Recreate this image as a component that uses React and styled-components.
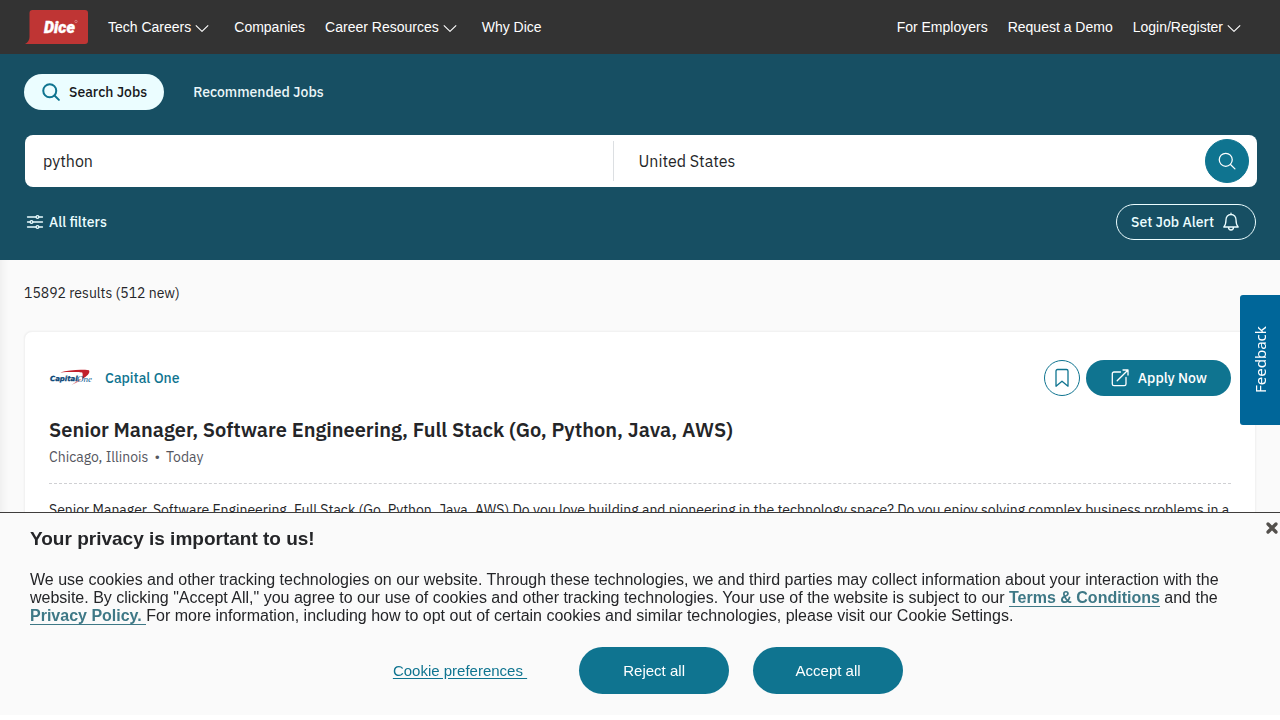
import React from "react";
import styled, { createGlobalStyle } from "styled-components";

const sans = '"Liberation Sans", Arial, sans-serif';
const plex = '"IBM Plex Sans", Roboto, sans-serif';

const GlobalStyle = createGlobalStyle`
  *, *::before, *::after { box-sizing: border-box; }
  body { margin: 0; background: #fafafa; color: #242528; font-family: ${plex}; font-size: 14px; overflow: hidden; }
  h1, h2, p { margin: 0; }
  button, input { font: inherit; }
  button { cursor: pointer; }
  svg { display: block; flex: none; }
`;

const Header = styled.header`
  display: flex;
  align-items: center;
  justify-content: space-between;
  height: 54px;
  padding: 0 34px 0 24px;
  background: #333;
  font-family: ${sans};
`;

const Nav = styled.nav`
  display: flex;
  align-items: center;
  gap: 20px;
`;

const LogoLink = styled.a`
  display: block;
`;

const NavLink = styled.a`
  color: #fff;
  line-height: 20px;
  text-decoration: none;
`;

const MenuButton = styled.button`
  display: flex;
  align-items: center;
  gap: 3px;
  padding: 0 4px 0 0;
  border: 0;
  background: none;
  color: #fff;
  line-height: 20px;
`;

const Hero = styled.section`
  display: flex;
  flex-direction: column;
  padding: 20px 24px;
  background: #174f63;
`;

const Tabs = styled.div`
  display: flex;
  gap: 12px;
`;

const Tab = styled.button`
  display: flex;
  align-items: center;
  gap: 8px;
  height: 36px;
  padding: 0 17px;
  border: 0;
  border-radius: 18px;
  background: ${(p) => (p.$active ? "#ebfdff" : "transparent")};
  color: ${(p) => (p.$active ? "#17181a" : "#ebf6f8")};
  font-weight: 500;

  svg { color: #0f7490; }
`;

const SearchBar = styled.form`
  display: flex;
  align-items: center;
  height: 52px;
  margin: 25px -1px 17px 1px;
  padding: 0 8px 0 0;
  border-radius: 8px;
  background: #fff;
`;

const Field = styled.input`
  flex: 1 1 ${(p) => p.$basis};
  min-width: 0;
  height: 40px;
  padding: 0 ${(p) => p.$pad};
  border: 0;
  border-left: 1px solid ${(p) => (p.$divided ? "#dcdfe2" : "transparent")};
  outline: 0;
  background: none;
  color: #242528;
  font-size: 16px;
`;

const RoundButton = styled.button`
  display: grid;
  place-items: center;
  flex: none;
  width: ${(p) => p.$size};
  height: ${(p) => p.$size};
  padding: 0;
  border: 1px solid #0f7490;
  border-radius: 50%;
  background: ${(p) => (p.$filled ? "#0f7490" : "#fff")};
  color: ${(p) => (p.$filled ? "#fff" : "#0f7490")};
`;

const FilterRow = styled.div`
  display: flex;
  align-items: center;
  justify-content: space-between;
`;

const FilterButton = styled.button`
  display: flex;
  align-items: center;
  gap: 5px;
  padding: 0 2px;
  border: 0;
  background: none;
  color: #ebfdff;
  font-weight: 500;
`;

const AlertButton = styled.button`
  display: flex;
  align-items: center;
  gap: 7px;
  height: 36px;
  padding: 0 14px;
  border: 1px solid #ebfdff;
  border-radius: 18px;
  background: none;
  color: #ebfdff;
  font-weight: 500;
`;

const Results = styled.main`
  padding: 23px 24px;
  box-shadow: inset 10px 0 8px -8px rgba(0, 0, 0, 0.06);
`;

const ResultCount = styled.p`
  line-height: 20px;
`;

const Card = styled.article`
  margin-top: 28px;
  padding: 28px 24px;
  border: 1px solid #f2f2f2;
  border-radius: 8px;
  background: #fff;
  box-shadow: 0 0 2px rgba(0, 0, 0, 0.06);
`;

const CardTop = styled.div`
  display: flex;
  align-items: center;
  justify-content: space-between;
`;

const Company = styled.a`
  display: flex;
  align-items: center;
  gap: 12px;
  color: #0f7490;
  font-weight: 500;
  text-decoration: none;
`;

const Actions = styled.div`
  display: flex;
  gap: 6px;
`;

const ApplyButton = styled.button`
  display: flex;
  align-items: center;
  justify-content: center;
  gap: 8px;
  min-width: 145px;
  height: 36px;
  padding: 0 24px;
  border: 0;
  border-radius: 18px;
  background: #0f7490;
  color: #fff;
  font-weight: 500;
`;

const JobTitle = styled.h2`
  margin-top: 20px;
  color: #242528;
  font-size: 20px;
  font-weight: 600;
  line-height: 28px;
`;

const JobMeta = styled.p`
  display: flex;
  gap: 6px;
  margin-top: 3px;
  color: #55565e;
  line-height: 20px;
`;

const Summary = styled.p`
  margin-top: 16px;
  padding-top: 16px;
  border-top: 1px dashed #cfd0d3;
  line-height: 20px;
`;

const FeedbackTab = styled.button`
  position: fixed;
  top: 295px;
  right: 0;
  width: 40px;
  height: 130px;
  padding: 0;
  border: 0;
  border-radius: 0 3px 3px 0;
  background: #006699;
  color: #fff;
  font-family: "Noto Sans", sans-serif;
  font-size: 15px;
  writing-mode: vertical-rl;
  transform: rotate(180deg);
`;

const Banner = styled.section`
  position: fixed;
  right: 0;
  bottom: 5px;
  left: 0;
  padding: 14px 30px 21px;
  border-top: 1px solid #3f3d3c;
  background: #fafafa;
  box-shadow: 0 5px 0 #fff;
  font-family: ${sans};
`;

const BannerTitle = styled.h2`
  color: #242528;
  font-size: 19px;
  line-height: 24px;
`;

const BannerText = styled.p`
  margin-top: 20px;
  font-size: 16px;
  line-height: 18px;
`;

const PolicyLink = styled.a`
  border-bottom: 1px solid #3e7886;
  color: #3e7886;
  font-weight: 700;
  text-decoration: none;
  white-space: pre-wrap;
`;

const BannerActions = styled.div`
  display: flex;
  align-items: center;
  justify-content: center;
  gap: 24px;
  margin-top: 22px;
  padding-left: 16px;
  font-size: 15px;
`;

const PreferencesButton = styled.button`
  margin-right: 28px;
  padding: 0;
  border: 0;
  background: none;
  color: #0f7490;
  text-decoration: underline;
  text-underline-offset: 2px;
  white-space: pre;
`;

const ConsentButton = styled.button`
  width: 150px;
  height: 47px;
  border: 0;
  border-radius: 24px;
  background: #0f7490;
  color: #fff;
`;

const CloseButton = styled.button`
  position: absolute;
  top: 8px;
  right: 1px;
  padding: 0;
  border: 0;
  background: none;
  color: #53504c;
`;

const Svg = ({ w = 24, h = w, box = "0 0 24 24", sw = 1.5, cap = "round", children }) => (
  <svg width={w} height={h} viewBox={box} fill="none" stroke="currentColor" strokeWidth={sw} strokeLinecap={cap} strokeLinejoin="round" aria-hidden="true">
    {children}
  </svg>
);

const Chevron = () => (
  <Svg w={16} box="0 0 16 16" sw={1.1} cap="butt">
    <path d="M1.800 6.300L8 12.300l6.200-6" />
  </Svg>
);

const SearchIcon = ({ size, sw }) => (
  <Svg w={size} sw={sw}>
    <circle cx="10.5" cy="10.5" r="7.800" />
    <path d="M16.200 16.200l5.300 5.300" />
  </Svg>
);

const FiltersIcon = () => (
  <Svg w={18} box="0 0 18 18" sw={1.3}>
    <path d="M1.500 4H10M13 4h3.500M1.500 9H4M7 9h9.500M1.500 14H10M13 14h3.500" />
    <circle cx="11.500" cy="4" r="1.400" />
    <circle cx="5.500" cy="9" r="1.400" />
    <circle cx="11.500" cy="14" r="1.400" />
  </Svg>
);

const BellIcon = () => (
  <Svg w={20} box="0 0 20 20" sw={1.3}>
    <path d="M10 1.200v1.300M10 2.500c-3.100 0-5 2.300-5 5.300 0 4-1 6-2.200 7.200h14.400C16 13.800 15 11.800 15 7.800c0-3-1.900-5.300-5-5.300zM7.500 15.200c0 1.600 1 2.800 2.500 2.800s2.500-1.200 2.500-2.800" />
  </Svg>
);

const BookmarkIcon = () => (
  <Svg w={20} box="0 0 20 20" sw={1.3}>
    <path d="M4 3c0-.9.600-1.500 1.500-1.500h9c.9 0 1.500.6 1.500 1.500v15.200L10 13.200l-6 5z" />
  </Svg>
);

const ExternalIcon = () => (
  <Svg w={20} box="0 0 20 20" sw={1.3}>
    <path d="M10.500 4H4c-1 0-1.700.7-1.700 1.700V16c0 1 .7 1.700 1.700 1.700h10.300c1 0 1.700-.7 1.700-1.700V9.500M7.200 12.800L18 2M13 2h5v5" />
  </Svg>
);

const CloseIcon = () => (
  <Svg w={14} box="0 0 14 14" sw={3.4}>
    <path d="M3 3l8 8M11 3l-8 8" />
  </Svg>
);

const DiceLogo = () => (
  <svg width="64" height="34" viewBox="0 0 64 34" role="img" aria-label="Dice">
    <path d="M5.500 3q0-3 3-3H61q3 0 3 3v28q0 3-3 3H1Q5.500 31.500 5.500 27z" fill="#bf3534" />
    <text x="20" y="23" fill="#fff" stroke="#fff" strokeWidth=".4" fontFamily="Roboto, sans-serif" fontSize="16" fontWeight="900" fontStyle="italic">Dice</text>
    <circle cx="52" cy="11.500" r="1.200" fill="none" stroke="#e8b4b4" strokeWidth=".5" />
  </svg>
);

const CapitalOneLogo = () => (
  <svg width="44" height="18" viewBox="0 0 44 18" role="img" aria-label="Capital One">
    <path d="M11 3.400C20 .8 32 .2 40 1.200c1.500 2.900-2 6-7 8.800.5-2 1-4 .4-6.300C32 2.900 21 2.600 11 3.400z" fill="#c2202c" />
    <path d="M32.500 10.500C29 13 26 14.500 22.500 16c3-2.200 5-3.800 7.500-6z" fill="#dd8c92" />
    <text x="1" y="12" fill="#0b4778" stroke="#0b4778" strokeWidth=".3" fontFamily="DejaVu Sans, sans-serif" fontSize="7" fontWeight="700" fontStyle="italic">Capital</text>
    <text x="28" y="12.500" fill="#0b5b94" fontFamily="Liberation Serif, serif" fontSize="9" fontStyle="italic">One</text>
  </svg>
);

export default function App() {
  return (
    <>
      <GlobalStyle />
      <Header>
        <Nav aria-label="Main">
          <LogoLink href="#"><DiceLogo /></LogoLink>
          <MenuButton>Tech Careers <Chevron /></MenuButton>
          <NavLink href="#">Companies</NavLink>
          <MenuButton>Career Resources <Chevron /></MenuButton>
          <NavLink href="#">Why Dice</NavLink>
        </Nav>
        <Nav aria-label="Account">
          <NavLink href="#">For Employers</NavLink>
          <NavLink href="#">Request a Demo</NavLink>
          <MenuButton>Login/Register <Chevron /></MenuButton>
        </Nav>
      </Header>
      <Hero>
        <Tabs>
          <Tab $active><SearchIcon size={20} sw={2.4} />Search Jobs</Tab>
          <Tab>Recommended Jobs</Tab>
        </Tabs>
        <SearchBar onSubmit={(e) => e.preventDefault()}>
          <Field $pad="17px" $basis="55px" aria-label="Job title, skill or company" defaultValue="python" />
          <Field $pad="25px" $basis="60px" $divided aria-label="Location" defaultValue="United States" />
          <RoundButton $size="44px" $filled aria-label="Search"><SearchIcon size={20} sw={1.5} /></RoundButton>
        </SearchBar>
        <FilterRow>
          <FilterButton><FiltersIcon />All filters</FilterButton>
          <AlertButton>Set Job Alert <BellIcon /></AlertButton>
        </FilterRow>
      </Hero>
      <Results>
        <ResultCount>15892 results (512 new)</ResultCount>
        <Card>
          <CardTop>
            <Company href="#"><CapitalOneLogo />Capital One</Company>
            <Actions>
              <RoundButton $size="36px" aria-label="Save job"><BookmarkIcon /></RoundButton>
              <ApplyButton><ExternalIcon />Apply Now</ApplyButton>
            </Actions>
          </CardTop>
          <JobTitle>Senior Manager, Software Engineering, Full Stack (Go, Python, Java, AWS)</JobTitle>
          <JobMeta><span>Chicago, Illinois</span><span>•</span><span>Today</span></JobMeta>
          <Summary>
            Senior Manager, Software Engineering, Full Stack (Go, Python, Java, AWS) Do you love building and pioneering in the technology space? Do you enjoy solving complex business problems in a
          </Summary>
        </Card>
      </Results>
      <FeedbackTab>Feedback</FeedbackTab>
      <Banner aria-label="Privacy">
        <BannerTitle>Your privacy is important to us!</BannerTitle>
        <BannerText>
          We use cookies and other tracking technologies on our website. Through these technologies, we and third parties may collect information about your interaction with the website. By clicking "Accept All," you agree to our use of cookies and other tracking technologies. Your use of the website is subject to our <PolicyLink href="#">Terms &amp; Conditions</PolicyLink> and the <PolicyLink href="#">{"Privacy Policy. "}</PolicyLink>For more information, including how to opt out of certain cookies and similar technologies, please visit our Cookie Settings.
        </BannerText>
        <BannerActions>
          <PreferencesButton>{"Cookie preferences "}</PreferencesButton>
          <ConsentButton>Reject all</ConsentButton>
          <ConsentButton>Accept all</ConsentButton>
        </BannerActions>
        <CloseButton aria-label="Close"><CloseIcon /></CloseButton>
      </Banner>
    </>
  );
}
